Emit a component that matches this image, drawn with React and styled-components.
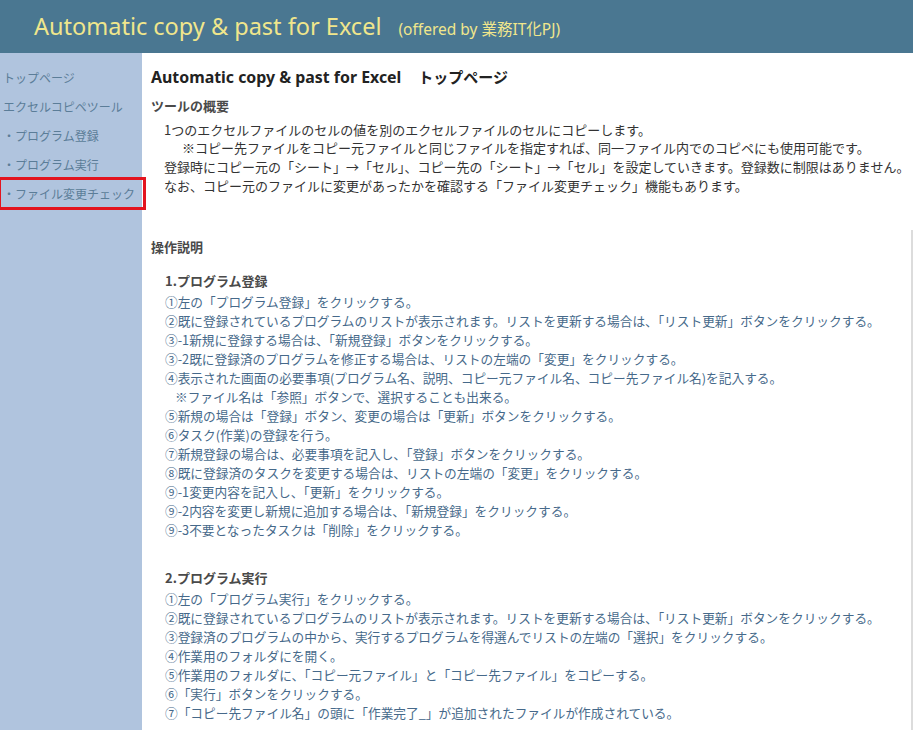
import React from "react"
import styled, { createGlobalStyle } from "styled-components"

const GlobalStyle = createGlobalStyle`
  html, body {
    margin: 0;
    padding: 0;
    background: #ffffff;
  }
  body {
    font-family: "Noto Sans", "Noto Sans CJK JP", sans-serif;
  }
`

const Page = styled.div`
  display: flex;
  flex-direction: column;
  min-height: 730px;
`

const Header = styled.header`
  height: 53px;
  background: #4a7791;
  display: flex;
  align-items: center;
  padding-left: 34px;
  gap: 17px;
  color: #f0e68c;
  white-space: nowrap;
`

const HeaderTitle = styled.h1`
  margin: 0;
  font-family: "Noto Sans", "Noto Sans CJK JP", sans-serif;
  font-size: 23.5px;
  font-weight: 400;
  line-height: 1;
`

const HeaderSub = styled.span`
  font-family: "Noto Sans", "Noto Sans CJK JP", sans-serif;
  font-size: 15.5px;
  padding-top: 4px;
`

const Body = styled.div`
  flex: 1;
  display: flex;
`

const Sidebar = styled.nav`
  width: 142px;
  flex-shrink: 0;
  background: #b0c4de;
  padding-top: 9.5px;
`

const NavItem = styled.div`
  height: 29px;
  line-height: 29px;
  padding-left: 3px;
  font-family: "Noto Sans CJK JP", sans-serif;
  font-size: 12px;
  color: #5b7d98;
  white-space: nowrap;
  ${(p) =>
    p.$marked &&
    `
    margin-right: -2px;
    outline: 3px solid #e3141f;
    outline-offset: -1px;
  `}
`

const Content = styled.main`
  flex: 1;
  padding: 14px 0 0 9px;
  color: #333333;
  font-family: "Noto Sans CJK JP", sans-serif;
  font-size: 13px;
`

const PageTitle = styled.h2`
  margin: 0;
  line-height: 20px;
  font-size: 15.9px;
  font-weight: 700;
  color: #222222;
  font-family: "Noto Sans", "Noto Sans CJK JP", sans-serif;
`

const TitleJa = styled.span`
  margin-left: 17px;
  font-size: 15px;
`

const SectionTitle = styled.h3`
  margin: ${(p) => p.$top || "9px"} 0 0;
  line-height: 20px;
  font-size: 13px;
  font-weight: 700;
  color: #4a4a4a;
`

const Overview = styled.div`
  margin-top: 4.5px;
  padding-left: 13px;
`

const Line = styled.div`
  line-height: ${(p) => p.$lh || "18.7px"};
  padding-left: ${(p) => p.$indent || 0}px;
  white-space: nowrap;
`

const Manual = styled.section`
  margin-top: 34.5px;
  padding-top: 7px;
  padding-bottom: 20px;
  border-right: 2px solid #dcdcdc;
`

const Group = styled.div`
  padding-left: 14px;
  margin-top: ${(p) => p.$top};
`

const GroupTitle = styled.h4`
  margin: 0;
  line-height: 20px;
  font-size: 13px;
  font-weight: 700;
  color: #4a4a4a;
`

const Steps = styled.div`
  margin-top: 1.5px;
  font-size: 12.7px;
  color: #46698a;
`

const nav = [
  { label: "トップページ" },
  { label: "エクセルコピペツール" },
  { label: "・プログラム登録" },
  { label: "・プログラム実行" },
  { label: "・ファイル変更チェック", marked: true },
]

const overview = [
  { text: "1つのエクセルファイルのセルの値を別のエクセルファイルのセルにコピーします。" },
  { text: "※コピー先ファイルをコピー元ファイルと同じファイルを指定すれば、同一ファイル内でのコピペにも使用可能です。", indent: 18 },
  { text: "登録時にコピー元の「シート」→「セル」、コピー先の「シート」→「セル」を設定していきます。登録数に制限はありません。" },
  { text: "なお、コピー元のファイルに変更があったかを確認する「ファイル変更チェック」機能もあります。" },
]

const register = [
  { text: "①左の「プログラム登録」をクリックする。" },
  { text: "②既に登録されているプログラムのリストが表示されます。リストを更新する場合は、「リスト更新」ボタンをクリックする。" },
  { text: "③-1新規に登録する場合は、「新規登録」ボタンをクリックする。" },
  { text: "③-2既に登録済のプログラムを修正する場合は、リストの左端の「変更」をクリックする。" },
  { text: "④表示された画面の必要事項(プログラム名、説明、コピー元ファイル名、コピー先ファイル名)を記入する。" },
  { text: "※ファイル名は「参照」ボタンで、選択することも出来る。", indent: 10 },
  { text: "⑤新規の場合は「登録」ボタン、変更の場合は「更新」ボタンをクリックする。" },
  { text: "⑥タスク(作業)の登録を行う。" },
  { text: "⑦新規登録の場合は、必要事項を記入し、「登録」ボタンをクリックする。" },
  { text: "⑧既に登録済のタスクを変更する場合は、リストの左端の「変更」をクリックする。" },
  { text: "⑨-1変更内容を記入し、「更新」をクリックする。" },
  { text: "⑨-2内容を変更し新規に追加する場合は、「新規登録」をクリックする。" },
  { text: "⑨-3不要となったタスクは「削除」をクリックする。" },
]

const run = [
  { text: "①左の「プログラム実行」をクリックする。" },
  { text: "②既に登録されているプログラムのリストが表示されます。リストを更新する場合は、「リスト更新」ボタンをクリックする。" },
  { text: "③登録済のプログラムの中から、実行するプログラムを得選んでリストの左端の「選択」をクリックする。" },
  { text: "④作業用のフォルダにを開く。" },
  { text: "⑤作業用のフォルダに、「コピー元ファイル」と「コピー先ファイル」をコピーする。" },
  { text: "⑥「実行」ボタンをクリックする。" },
  { text: "⑦「コピー先ファイル名」の頭に「作業完了_」が追加されたファイルが作成されている。" },
]

function StepList({ items }) {
  return (
    <Steps>
      {items.map((s, i) => (
        <Line key={i} $lh="19px" $indent={s.indent}>
          {s.text}
        </Line>
      ))}
    </Steps>
  )
}

export default function App() {
  return (
    <Page>
      <GlobalStyle />
      <Header>
        <HeaderTitle>Automatic copy &amp; past for Excel</HeaderTitle>
        <HeaderSub>(offered by 業務IT化PJ)</HeaderSub>
      </Header>
      <Body>
        <Sidebar>
          {nav.map((n) => (
            <NavItem key={n.label} $marked={n.marked}>
              {n.label}
            </NavItem>
          ))}
        </Sidebar>
        <Content>
          <PageTitle>
            Automatic copy &amp; past for Excel<TitleJa>トップページ</TitleJa>
          </PageTitle>
          <SectionTitle>ツールの概要</SectionTitle>
          <Overview>
            {overview.map((o, i) => (
              <Line key={i} $indent={o.indent}>
                {o.text}
              </Line>
            ))}
          </Overview>
          <Manual>
            <SectionTitle $top="0">操作説明</SectionTitle>
            <Group $top="14px">
              <GroupTitle>1.プログラム登録</GroupTitle>
              <StepList items={register} />
            </Group>
            <Group $top="28.5px">
              <GroupTitle>2.プログラム実行</GroupTitle>
              <StepList items={run} />
            </Group>
          </Manual>
        </Content>
      </Body>
    </Page>
  )
}
